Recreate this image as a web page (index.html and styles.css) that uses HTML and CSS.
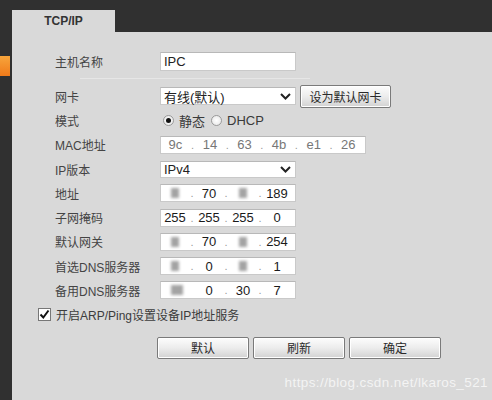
FILE: index.html
```html
<!DOCTYPE html>
<html lang="zh-CN">
  <head>
    <meta charset="UTF-8" />
    <title>TCP/IP</title>
    <link rel="stylesheet" href="styles.css">
  </head>
  <body>
    <div class="app">
      <div class="sidebar">
        <div class="accent"></div>
      </div>
      <div class="main">
        <div class="tabs">
          <div class="tab">TCP/IP</div>
        </div>

        <!-- 网络设置 -->
        <div class="panel">
          <div class="row">
            <label>主机名称</label>
            <div class="field text">IPC</div>
          </div>
          <div class="sep"></div>
          <div class="row">
            <label>网卡</label>
            <div class="ctl">
              <div class="field select">有线(默认)
                <svg class="arrow" width="11" height="7" viewBox="0 0 11 7"><polyline points="1,1 5.5,5.5 10,1" fill="none" stroke="#222" stroke-width="2"/></svg>
              </div>
              <button class="btn btn-nic">设为默认网卡</button>
            </div>
          </div>
          <div class="row">
            <label>模式</label>
            <div class="ctl radios">
              <span class="radio on"></span><span class="rtext">静态</span>
              <span class="radio"></span><span class="rtext">DHCP</span>
            </div>
          </div>
          <div class="row">
            <label>MAC地址</label>
            <div class="field ip mac">
              <span class="oct">9c</span><span class="dot">.</span>
              <span class="oct">14</span><span class="dot">.</span>
              <span class="oct">63</span><span class="dot">.</span>
              <span class="oct">4b</span><span class="dot">.</span>
              <span class="oct">e1</span><span class="dot">.</span>
              <span class="oct">26</span>
            </div>
          </div>
          <div class="row">
            <label>IP版本</label>
            <div class="field select small">IPv4
              <svg class="arrow" width="11" height="7" viewBox="0 0 11 7"><polyline points="1,1 5.5,5.5 10,1" fill="none" stroke="#222" stroke-width="2"/></svg>
            </div>
          </div>
          <div class="row">
            <label>地址</label>
            <div class="field ip">
              <span class="oct"><i class="blur"></i></span><span class="dot">.</span>
              <span class="oct">70</span><span class="dot">.</span>
              <span class="oct"><i class="blur"></i></span><span class="dot">.</span>
              <span class="oct">189</span>
            </div>
          </div>
          <div class="row">
            <label>子网掩码</label>
            <div class="field ip">
              <span class="oct">255</span><span class="dot">.</span>
              <span class="oct">255</span><span class="dot">.</span>
              <span class="oct">255</span><span class="dot">.</span>
              <span class="oct">0</span>
            </div>
          </div>
          <div class="row">
            <label>默认网关</label>
            <div class="field ip">
              <span class="oct"><i class="blur"></i></span><span class="dot">.</span>
              <span class="oct">70</span><span class="dot">.</span>
              <span class="oct"><i class="blur"></i></span><span class="dot">.</span>
              <span class="oct">254</span>
            </div>
          </div>
          <div class="row">
            <label>首选DNS服务器</label>
            <div class="field ip">
              <span class="oct"><i class="blur"></i></span><span class="dot">.</span>
              <span class="oct">0</span><span class="dot">.</span>
              <span class="oct"><i class="blur"></i></span><span class="dot">.</span>
              <span class="oct">1</span>
            </div>
          </div>
          <div class="row">
            <label>备用DNS服务器</label>
            <div class="field ip">
              <span class="oct"><i class="blur wide"></i></span><span class="dot"></span>
              <span class="oct">0</span><span class="dot">.</span>
              <span class="oct">30</span><span class="dot">.</span>
              <span class="oct">7</span>
            </div>
          </div>
          <div class="row check-row">
            <span class="checkbox">
              <svg width="11" height="11" viewBox="0 0 11 11"><polyline points="1.5,5.5 4.3,8.5 9.5,1.5" fill="none" stroke="#111" stroke-width="2"/></svg>
            </span>
            <span>开启ARP/Ping设置设备IP地址服务</span>
          </div>
          <div class="actions">
            <button class="btn">默认</button>
            <button class="btn">刷新</button>
            <button class="btn">确定</button>
          </div>
        </div>
      </div>
    </div>
    <div class="watermark">https://blog.csdn.net/lkaros_521</div>
  </body>
</html>
```

FILE: styles.css
```css
body {
  margin: 0;
  background-color: #303030;
  font-family: "Liberation Sans", "Noto Sans CJK SC", sans-serif;
  font-size: 12px;
  color: #3c3c3c;
}

.app {
  display: flex;
  height: 400px;
  overflow: hidden;
}

.sidebar {
  width: 12px;
  flex-shrink: 0;
}

.accent {
  margin-top: 56px;
  width: 10px;
  height: 20px;
  background: linear-gradient(#f7a53c, #f07a1a);
}

.main {
  flex: 1;
  display: flex;
  flex-direction: column;
}

.tabs {
  height: 32px;
  padding-top: 10px;
  box-sizing: border-box;
}

.tab {
  width: 103px;
  height: 22px;
  line-height: 22px;
  text-align: center;
  background-color: #d9d9d9;
  font-weight: bold;
  font-size: 12px;
  color: #333;
}

.panel {
  flex: 1;
  background-color: #d9d9d9;
  padding: 17px 0 0 43px;
}

.row {
  display: flex;
  align-items: center;
  height: 24.25px;
}

.row label {
  width: 105px;
  flex-shrink: 0;
  color: #444;
}

.sep {
  height: 1px;
  width: 230px;
  margin: 5px 0 5px 25px;
  background-color: #e6e6e6;
}

.ctl {
  display: flex;
  align-items: center;
}

.field {
  box-sizing: border-box;
  width: 136px;
  background-color: #fff;
  border: 1px solid #c9c9c9;
  border-top-color: #b8b8b8;
  display: flex;
  align-items: center;
  font-size: 13px;
  color: #222;
}

.text {
  height: 19px;
  padding-left: 3px;
}

.select {
  height: 18px;
  padding-left: 3px;
  justify-content: space-between;
  padding-right: 4px;
}

.select.small {
  height: 17px;
}

.arrow {
  display: block;
}

.btn {
  height: 22px;
  border: 1px solid #7a7a7a;
  border-radius: 2px;
  background: linear-gradient(#fdfdfd, #ececec 50%, #d2d2d2);
  font-family: "Liberation Sans", "Noto Sans CJK SC", sans-serif;
  font-size: 12px;
  color: #2a2a2a;
  padding: 0;
  box-shadow: inset 0 0 0 1px #fff;
}

.btn-nic {
  width: 91px;
  height: 23px;
  margin-left: 4px;
}

.radios {
  padding-left: 3px;
}

.radio {
  box-sizing: border-box;
  width: 11px;
  height: 11px;
  border-radius: 50%;
  border: 1px solid #9a9a9a;
  background: radial-gradient(#fff, #e4e4e4);
  display: inline-flex;
  align-items: center;
  justify-content: center;
}

.radio.on::after {
  content: "";
  width: 5px;
  height: 5px;
  border-radius: 50%;
  background-color: #111;
}

.rtext {
  margin: 0 6px 0 5px;
  font-size: 13px;
  color: #3a3a3a;
}

.ip {
  height: 18px;
  color: #1a1a1a;
}

.mac {
  width: 206px;
  color: #777;
}

.oct {
  width: 28px;
  text-align: center;
  display: flex;
  justify-content: center;
}

.mac .oct {
  width: 28.6px;
}

.dot {
  width: 6px;
  text-align: center;
  color: #999;
  font-size: 11px;
}

.blur {
  display: block;
  width: 8px;
  height: 10px;
  background-color: #a3a3a3;
  filter: blur(1.6px);
}

.blur.wide {
  width: 12px;
  margin-left: 4px;
}

.check-row {
  margin-left: -17px;
}

.checkbox {
  box-sizing: border-box;
  width: 13px;
  height: 13px;
  border: 1px solid #777;
  background-color: #fff;
  margin-right: 5px;
  display: inline-flex;
  align-items: center;
  justify-content: center;
}

.actions {
  display: flex;
  gap: 4px;
  margin: 10px 0 0 102px;
}

.actions .btn {
  width: 92px;
}

.watermark {
  position: absolute;
  right: 4px;
  top: 375px;
  font-size: 13.5px;
  color: rgba(255, 255, 255, 0.72);
  letter-spacing: 0.4px;
}
```
